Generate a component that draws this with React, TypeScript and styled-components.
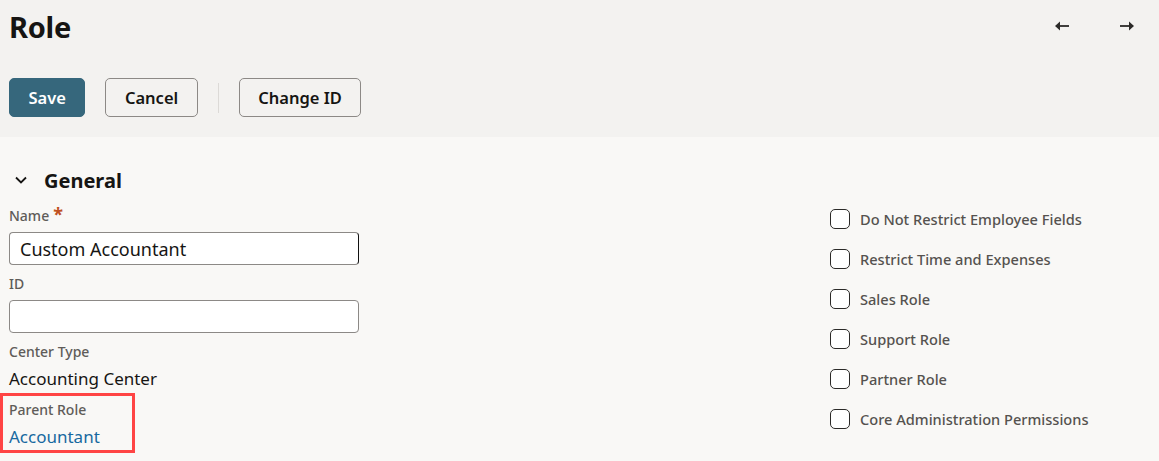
import styled, { createGlobalStyle } from "styled-components";

const GlobalStyle = createGlobalStyle`
  body {
    margin: 0;
    font-family: "Noto Sans", "Open Sans", sans-serif;
    background: #f9f8f6;
    color: #161513;
  }
  * { box-sizing: border-box; }
`;

const Page = styled.div`
  width: 100%;
  min-height: 100vh;
  background: #f9f8f6;
`;

const Header = styled.div`
  background: #f3f2f0;
  height: 137px;
  padding: 6px 16px 0 9px;
`;

const TitleRow = styled.div`
  display: flex;
  justify-content: space-between;
  align-items: center;
  height: 40px;
`;

const Title = styled.h1`
  margin: 0;
  font-size: 29px;
  font-weight: 700;
  letter-spacing: -0.3px;
  color: #161513;
`;

const Nav = styled.div`
  display: flex;
  gap: 33px;
`;

const NavButton = styled.button`
  width: 32px;
  height: 32px;
  border: 0;
  background: transparent;
  display: flex;
  align-items: center;
  justify-content: center;
  color: #2b2a28;
  padding: 0;
`;

const Toolbar = styled.div`
  display: flex;
  align-items: center;
  margin-top: 32px;
  gap: 20px;
`;

const Button = styled.button<{ $primary?: boolean }>`
  height: 39px;
  padding: 0 18.5px;
  border-radius: 5px;
  font-family: "Noto Sans", sans-serif;
  font-size: 16.5px;
  font-weight: 600;
  border: 1px solid ${(p) => (p.$primary ? "#36677c" : "#8c8986")};
  background: ${(p) => (p.$primary ? "#36677c" : "transparent")};
  color: ${(p) => (p.$primary ? "#ffffff" : "#161513")};
`;

const Divider = styled.div`
  width: 1px;
  height: 30px;
  background: #dcdad7;
`;

const Section = styled.div`
  padding: 31px 9px 0 9px;
`;

const SectionHeader = styled.div`
  display: flex;
  align-items: center;
  height: 24px;
  gap: 16px;
  padding-left: 5px;
  font-size: 20px;
  font-weight: 700;
  color: #161513;
`;

const Columns = styled.div`
  display: grid;
  grid-template-columns: 821px 1fr;
`;

const LeftCol = styled.div`
  display: flex;
  flex-direction: column;
  padding-top: 14px;
  width: 350px;
`;

const Label = styled.div<{ $gap?: number }>`
  font-size: 14px;
  line-height: 20px;
  font-weight: 500;
  color: #5f5c59;
  margin-top: ${(p) => p.$gap ?? 0}px;
`;

const Required = styled.span`
  color: #c0501f;
  font-size: 18px;
  font-weight: 700;
  margin-left: 4px;
  vertical-align: top;
  line-height: 16px;
`;

const Input = styled.input`
  margin-top: 6px;
  width: 350px;
  height: 33px;
  border: 1px solid #8c8986;
  border-right-color: #111;
  border-radius: 4px;
  background: #ffffff;
  padding: 0 10px;
  font-family: "Noto Sans", sans-serif;
  font-size: 18px;
  color: #161513;
  outline: none;
`;

const EmptyInput = styled(Input)`
  border-right-color: #8c8986;
`;

const Value = styled.div`
  margin-top: 5px;
  font-size: 17px;
  line-height: 24px;
  color: #161513;
`;

const Highlight = styled.div`
  margin-top: 2px;
  margin-left: -9px;
  width: 135px;
  height: 60px;
  border: 3px solid #ff4444;
  padding: 4px 0 0 6px;
`;

const Link = styled.a`
  display: block;
  margin-top: 5px;
  font-size: 17px;
  line-height: 24px;
  color: #1769a0;
  text-decoration: none;
`;

const RightCol = styled.div`
  display: flex;
  flex-direction: column;
  padding-top: 7px;
`;

const CheckRow = styled.label`
  display: flex;
  align-items: center;
  height: 40px;
  gap: 10px;
  font-size: 14.6px;
  font-weight: 500;
  color: #55524f;
`;

const Box = styled.span`
  width: 20px;
  height: 20px;
  border: 1.5px solid #2b2a28;
  border-radius: 5px;
  background: #ffffff;
`;

const ArrowLeft = () => (
  <svg width="16" height="16" viewBox="0 0 16 16" fill="none">
    <path d="M15 8H3" stroke="currentColor" strokeWidth="1.8" />
    <path d="M1 8L6 3.5V12.5Z" fill="currentColor" />
  </svg>
);

const ArrowRight = () => (
  <svg width="16" height="16" viewBox="0 0 16 16" fill="none">
    <path d="M1 8H13" stroke="currentColor" strokeWidth="1.8" />
    <path d="M15 8L10 3.5V12.5Z" fill="currentColor" />
  </svg>
);

const Chevron = () => (
  <svg width="14" height="14" viewBox="0 0 14 14" fill="none">
    <path d="M2 4.5L7 9.5L12 4.5" stroke="#161513" strokeWidth="1.8" />
  </svg>
);

const checks = [
  "Do Not Restrict Employee Fields",
  "Restrict Time and Expenses",
  "Sales Role",
  "Support Role",
  "Partner Role",
  "Core Administration Permissions",
];

export default function App() {
  return (
    <Page>
      <GlobalStyle />
      <Header>
        <TitleRow>
          <Title>Role</Title>
          <Nav>
            <NavButton aria-label="Previous"><ArrowLeft /></NavButton>
            <NavButton aria-label="Next"><ArrowRight /></NavButton>
          </Nav>
        </TitleRow>
        <Toolbar>
          <Button $primary>Save</Button>
          <Button>Cancel</Button>
          <Divider />
          <Button>Change ID</Button>
        </Toolbar>
      </Header>
      <Section>
        <SectionHeader>
          <Chevron />
          General
        </SectionHeader>
        <Columns>
          <LeftCol>
            <Label>
              Name<Required>*</Required>
            </Label>
            <Input defaultValue="Custom Accountant" />
            <Label $gap={9}>ID</Label>
            <EmptyInput />
            <Label $gap={9}>Center Type</Label>
            <Value>Accounting Center</Value>
            <Highlight>
              <Label>Parent Role</Label>
              <Link href="#">Accountant</Link>
            </Highlight>
          </LeftCol>
          <RightCol>
            {checks.map((c) => (
              <CheckRow key={c}>
                <Box />
                {c}
              </CheckRow>
            ))}
          </RightCol>
        </Columns>
      </Section>
    </Page>
  );
}
